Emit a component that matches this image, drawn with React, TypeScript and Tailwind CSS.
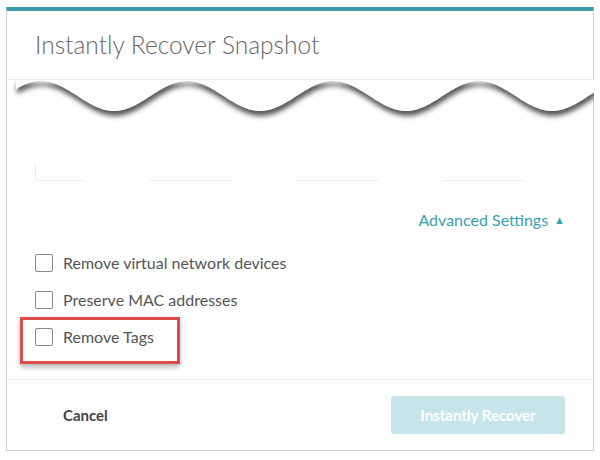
import { useState } from "react";

const font = { fontFamily: '"Lato", "Open Sans", sans-serif' };

// torn-edge wave between the header and the (hidden) form body
function Wave() {
  const pts: string[] = [];
  for (let x = 9; x <= 587; x += 2) {
    const y = 16 - 15 * Math.cos((2 * Math.PI * (x + 6 - 40)) / 146);
    pts.push(`${x},${y.toFixed(2)}`);
  }
  const d = `M9,-2 L${pts.join(" L")} L587,-2 Z`;
  return (
    <svg width="587" height="44" viewBox="0 0 587 44" className="block">
      <defs>
        <filter id="torn" x="-5%" y="-20%" width="110%" height="160%">
          <feDropShadow dx="1" dy="5" stdDeviation="2.8" floodColor="#444" floodOpacity="0.9" />
        </filter>
      </defs>
      <path d={d} fill="#fff" filter="url(#torn)" />
    </svg>
  );
}

function Check({ label, checked, onChange }: { label: string; checked: boolean; onChange: () => void }) {
  return (
    <label className="flex h-[37px] cursor-pointer items-center gap-[10px]">
      <span
        onClick={onChange}
        className="flex h-[18px] w-[18px] items-center justify-center rounded-[2px] border border-[#8a8a8a] bg-white text-[12px] text-[#3a9fae]"
      >
        {checked ? "✓" : ""}
      </span>
      <span className="text-[16px] text-[#555]">{label}</span>
    </label>
  );
}

export default function App() {
  const [opts, setOpts] = useState({ nics: false, mac: false, tags: false });

  return (
    <div className="h-[460px] w-[600px] bg-white pt-[7px]" style={font}>
      <div className="ml-[6px] w-[588px] border-x border-b border-t-4 border-[#cfcfcf] border-t-[#3d9ba7] bg-white">
        <header className="flex h-[69px] items-center border-b border-[#ececec] px-[28px]">
          <h1 className="text-[24.5px] font-light text-[#666]">Instantly Recover Snapshot</h1>
        </header>

        <Wave />

        <div className="mt-[39px] flex h-[18px] px-[28px]">
          <div className="h-full w-[49px] border-b border-l border-[#ececec]" />
          <div className="ml-[66px] h-full w-[81px] border-b border-[#ececec]" />
          <div className="ml-[65px] h-full w-[82px] border-b border-[#ececec]" />
          <div className="ml-[64px] h-full w-[82px] border-b border-[#ececec]" />
        </div>

        <div className="mt-[29px] flex justify-end px-[28px]">
          <button className="flex h-[20px] items-center gap-[6px] text-[16px] text-[#3a9fae]">
            Advanced Settings <span className="text-[11px]">▲</span>
          </button>
        </div>

        <div className="mt-[14px] px-[28px] pb-[24px]">
          <Check label="Remove virtual network devices" checked={opts.nics} onChange={() => setOpts({ ...opts, nics: !opts.nics })} />
          <Check label="Preserve MAC addresses" checked={opts.mac} onChange={() => setOpts({ ...opts, mac: !opts.mac })} />
          <div className="relative">
            <Check label="Remove Tags" checked={opts.tags} onChange={() => setOpts({ ...opts, tags: !opts.tags })} />
            <div className="pointer-events-none absolute left-[-15px] top-[-1px] h-[47px] w-[160px] border-[3px] border-[#e04a4a] shadow-[0_3px_5px_rgba(0,0,0,0.3)]" />
          </div>
        </div>

        <footer className="flex h-[71px] items-center justify-between border-t border-[#ececec] pl-[56px] pr-[28px]">
          <button className="text-[15px] font-bold text-[#444]">Cancel</button>
          <button disabled className="h-[38px] w-[174px] rounded-[3px] bg-[#c6e5ea] text-[15px] font-bold text-white">
            Instantly Recover
          </button>
        </footer>
      </div>
    </div>
  );
}
